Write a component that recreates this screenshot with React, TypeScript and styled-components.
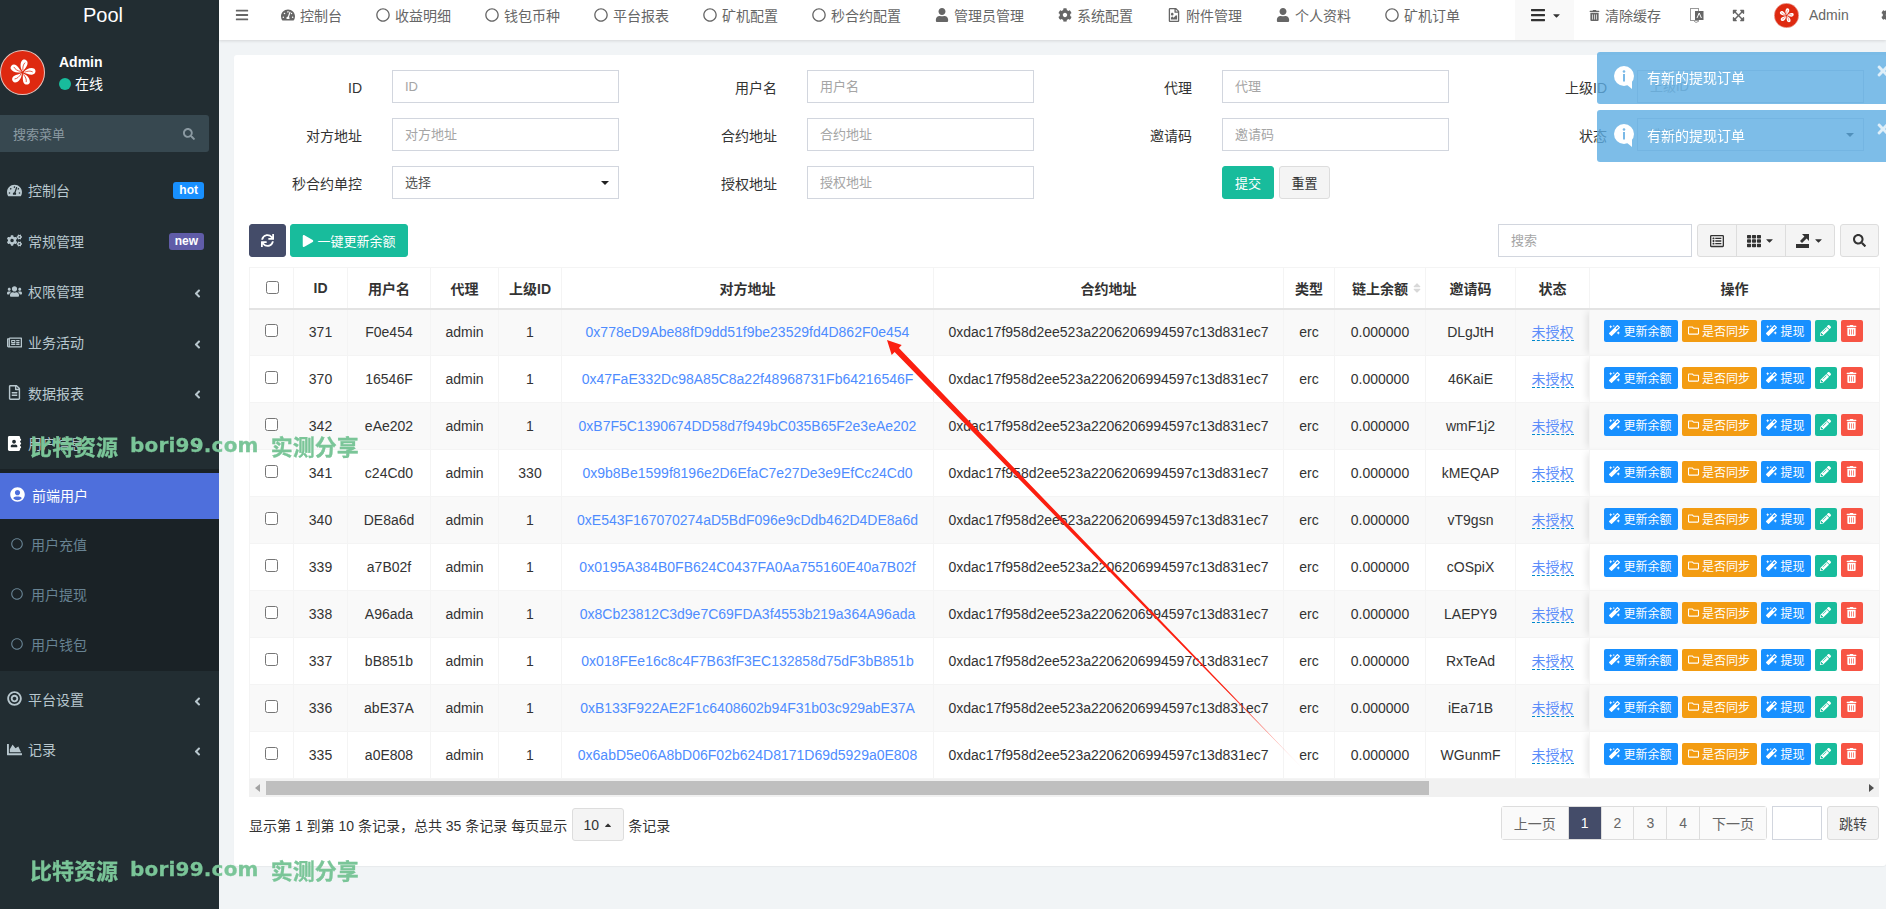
import React from "react";
import styled, { createGlobalStyle } from "styled-components";
import {
  FaAddressBook,
  FaAngleDown,
  FaAngleLeft,
  FaBars,
  FaBullseye,
  FaCaretDown,
  FaCaretUp,
  FaChartArea,
  FaCog,
  FaCogs,
  FaExpandArrowsAlt,
  FaMagic,
  FaPencilAlt,
  FaPlay,
  FaRegCircle,
  FaRegFileAlt,
  FaRegFileImage,
  FaRegFolder,
  FaRegListAlt,
  FaRegNewspaper,
  FaSearch,
  FaSort,
  FaSync,
  FaTachometerAlt,
  FaTh,
  FaTimes,
  FaTrashAlt,
  FaUser,
  FaUserCircle,
  FaUsers,
} from "react-icons/fa";

const GlobalStyle = createGlobalStyle`
  * {
    box-sizing: border-box;
  }
  html, body {
    margin: 0;
    padding: 0;
    height: 909px;
    overflow: hidden;
    background: #f1f4f6;
    font-family: "Liberation Sans", "Noto Sans CJK SC", sans-serif;
    font-size: 14px;
    color: #333;
  }
`;

const Layout = styled.div`
  display: flex;
  width: 1886px;
  height: 909px;
  overflow: hidden;
`;

/* sidebar */
const Sidebar = styled.aside`
  width: 219px;
  flex-shrink: 0;
  height: 909px;
  background: #222d32;
  color: #b8c7ce;
`;
const Logo = styled.div`
  height: 30px;
  line-height: 30px;
  text-align: center;
  font-size: 20px;
  color: #fff;
  padding-right: 13px;
`;
const UserPanel = styled.div`
  display: flex;
  align-items: center;
  gap: 14px;
  margin-top: 20px;
  height: 45px;
`;
const UserName = styled.div`
  font-size: 14px;
  font-weight: 700;
  color: #fff;
  line-height: 18px;
  margin: 1px 0 4px;
`;
const UserStatus = styled.div`
  display: flex;
  align-items: center;
  gap: 4px;
  color: #fff;
  font-size: 14px;
  line-height: 18px;
`;
const StatusDot = styled.span`
  width: 12px;
  height: 12px;
  border-radius: 50%;
  background: #18bc9c;
`;
const MenuSearch = styled.div`
  display: flex;
  align-items: center;
  justify-content: space-between;
  width: 209px;
  height: 37px;
  margin: 20px 0 13px;
  padding: 0 14px 0 13px;
  background: #374850;
  border-radius: 0 3px 3px 0;
  color: #8b9aa2;
  font-size: 13px;
`;
const MenuRow = styled.div`
  position: relative;
  display: flex;
  align-items: center;
  height: 50.6px;
  padding-left: 6px;
  font-size: 14px;
  color: #b8c7ce;
`;
const MenuIcon = styled.span`
  display: flex;
  justify-content: center;
  width: 16px;
  margin-right: 6px;
  font-size: 15px;
`;
const Badge = styled.span<{ $bg: string }>`
  position: absolute;
  right: 15px;
  top: 17px;
  height: 17px;
  line-height: 17px;
  padding: 0 6px;
  border-radius: 3px;
  background: ${(p) => p.$bg};
  color: #fff;
  font-size: 12px;
  font-weight: 700;
`;
const MenuArrow = styled.span`
  position: absolute;
  right: 15px;
  top: 21px;
  font-size: 13px;
  line-height: 13px;
  color: #b8c7ce;
`;
const SubMenu = styled.div`
  background: #1a2226;
  padding: 4px 0 2px;
  margin-bottom: 3px;
`;
const ActiveRow = styled.div`
  display: flex;
  align-items: center;
  gap: 7px;
  height: 46px;
  padding: 0 0 2px 10px;
  background: #4e6fdc;
  color: #fff;
  font-size: 14px;
`;
const SubRow = styled.div`
  display: flex;
  align-items: center;
  gap: 8px;
  height: 50px;
  padding-left: 11px;
  font-size: 14px;
  color: #688393;
`;

/* top bar */
const Main = styled.div`
  flex: 1;
  min-width: 0;
`;
const TopBar = styled.header`
  display: flex;
  align-items: flex-start;
  height: 40px;
  padding-left: 16px;
  background: #fff;
  box-shadow: 0 1px 3px rgba(0, 0, 0, 0.12);
  color: #666;
`;
const TopItem = styled.div<{ $gap?: number }>`
  display: flex;
  align-items: center;
  flex-shrink: 0;
  gap: 5px;
  height: 30px;
  margin-right: ${(p) => p.$gap ?? 34}px;
  font-size: 14px;
  white-space: nowrap;
  svg {
    font-size: 14px;
    flex-shrink: 0;
  }
`;
const TopName = styled.span`
  margin-left: 5px;
`;
const TopBlock = styled.div`
  display: flex;
  align-items: center;
  justify-content: center;
  flex-shrink: 0;
  gap: 5px;
  width: 59px;
  height: 40px;
  padding: 0 0 10px 3px;
  margin: 0 15px 0 21px;
  background: #f9f9f9;
  color: #333;
  svg:first-child {
    font-size: 16px;
  }
  svg:last-child {
    font-size: 11px;
  }
`;
const FlagSvg = styled.svg`
  flex-shrink: 0;
`;

/* content card */
const Card = styled.section`
  margin: 15px 0 0 15px;
  padding: 15px 7px 25px 15px;
  background: #fff;
  border-radius: 3px;
  box-shadow: 0 1px 1px rgba(0, 0, 0, 0.04);
`;
const FilterGrid = styled.form`
  display: grid;
  grid-template-columns: repeat(4, 370px);
  column-gap: 45px;
  row-gap: 15px;
`;
const Field = styled.div`
  display: flex;
  align-items: flex-start;
  height: 33px;
`;
const FieldLabel = styled.label`
  width: 113px;
  margin-right: 30px;
  padding-top: 10px;
  text-align: right;
  font-size: 14px;
  line-height: 16px;
  color: #333;
`;
const TextInput = styled.input<{ $width?: number; $height?: number }>`
  width: ${(p) => p.$width ?? 227}px;
  height: ${(p) => p.$height ?? 33}px;
  padding: 0 12px;
  border: 1px solid #d2d6de;
  background: #fff;
  font-family: inherit;
  font-size: 13px;
  color: #555;
  outline: none;
  &::placeholder {
    color: #a5a5a5;
  }
`;
const SelectBox = styled.div<{ $muted?: boolean }>`
  display: flex;
  align-items: center;
  justify-content: space-between;
  width: 227px;
  height: 33px;
  padding: 0 9px 3px 12px;
  border: 1px solid #d2d6de;
  font-size: 13px;
  color: ${(p) => (p.$muted ? "#a5a5a5" : "#555")};
`;
const SelectCaret = styled.span`
  width: 0;
  height: 0;
  margin-top: 3px;
  border-left: 4px solid transparent;
  border-right: 4px solid transparent;
  border-top: 4px solid #222;
`;
const FormButtons = styled.div`
  display: flex;
  gap: 5px;
  margin-left: 143px;
`;
const Btn = styled.button<{ $bg?: string; $color?: string; $width?: number }>`
  display: inline-flex;
  align-items: center;
  justify-content: center;
  gap: 3px;
  height: 33px;
  width: ${(p) => (p.$width ? `${p.$width}px` : "auto")};
  padding: 0;
  border: 1px solid ${(p) => p.$bg ?? "#ddd"};
  border-radius: 3px;
  background: ${(p) => p.$bg ?? "#f4f4f4"};
  color: ${(p) => p.$color ?? "#fff"};
  font-family: inherit;
  font-size: 13px;
`;
const Toolbar = styled.div`
  display: flex;
  align-items: center;
  gap: 4px;
  margin-top: 25px;
`;
const ToolbarRight = styled.div`
  display: flex;
  align-items: center;
  gap: 5px;
  margin-left: auto;
`;
const BtnGroup = styled.div`
  display: flex;
  height: 33px;
  border: 1px solid #ddd;
  border-radius: 3px;
  background: #f4f4f4;
  color: #333;
`;
const GroupCell = styled.div<{ $width: number }>`
  display: flex;
  align-items: center;
  justify-content: center;
  gap: 3px;
  width: ${(p) => p.$width}px;
  font-size: 14px;
  & + & {
    border-left: 1px solid #ddd;
  }
`;

/* table */
const Table = styled.table`
  width: 1630px;
  margin-top: 10px;
  border-collapse: collapse;
  table-layout: fixed;
  font-size: 14px;
  color: #333;
`;
const Th = styled.th<{ $fixed?: boolean }>`
  position: relative;
  height: 41px;
  padding: 0;
  border: 1px solid #f4f4f4;
  border-bottom: 2px solid #e3e3e3;
  text-align: center;
  font-size: 14px;
  font-weight: 700;
  white-space: nowrap;
  background: #fff;
  ${(p) => (p.$fixed ? "box-shadow: -6px 0 7px -3px rgba(0,0,0,.1);" : "")}
`;
const SortMark = styled.span`
  position: absolute;
  right: 2px;
  top: 14px;
  font-size: 12px;
  color: #d8d8d8;
`;
const Row = styled.tr<{ $odd: boolean }>`
  height: 47px;
  background: ${(p) => (p.$odd ? "#f9f9f9" : "#fff")};
`;
const Td = styled.td<{ $fixed?: boolean }>`
  padding: 0;
  border: 1px solid #f4f4f4;
  text-align: center;
  white-space: nowrap;
  ${(p) => (p.$fixed ? "box-shadow: -6px 0 7px -3px rgba(0,0,0,.1);" : "")}
`;
const RowCheck = styled.input`
  margin: 0 0 4px;
  vertical-align: middle;
`;
const AddressLink = styled.a`
  color: #4e8cff;
`;
const AuthLink = styled.a`
  display: inline-block;
  line-height: 16px;
  margin-top: -2px;
  color: #5c8dfa;
  border-bottom: 1px dashed #0088cc;
`;
const Actions = styled.div`
  display: flex;
  justify-content: center;
  gap: 4px;
  padding: 0 3px 3px 0;
`;
const ActionBtn = styled.span<{ $bg: string; $width: number }>`
  display: inline-flex;
  align-items: center;
  justify-content: center;
  gap: 3px;
  width: ${(p) => p.$width}px;
  height: 22px;
  border-radius: 2px;
  background: ${(p) => p.$bg};
  color: #fff;
  font-size: 12px;
  svg {
    font-size: 11px;
  }
`;
const ScrollTrack = styled.div`
  display: flex;
  align-items: center;
  width: 1630px;
  height: 18px;
  background: #f1f1f1;
`;
const ScrollLeft = styled.span`
  width: 0;
  height: 0;
  margin: 0 6px 0 6px;
  border-top: 4px solid transparent;
  border-bottom: 4px solid transparent;
  border-right: 5px solid #a3a3a3;
`;
const ScrollThumb = styled.div`
  width: 1163px;
  height: 14px;
  background: #bfbfbf;
`;
const ScrollRight = styled.span`
  width: 0;
  height: 0;
  margin-left: auto;
  margin-right: 5px;
  border-top: 4px solid transparent;
  border-bottom: 4px solid transparent;
  border-left: 5px solid #505050;
`;

/* footer */
const Footer = styled.div`
  display: flex;
  align-items: flex-start;
  justify-content: space-between;
  margin-top: 9px;
  height: 35px;
`;
const PageInfo = styled.div`
  display: flex;
  align-items: center;
  gap: 4px;
  height: 33px;
  margin-top: 2px;
  font-size: 14px;
  white-space: nowrap;
`;
const PageSize = styled.div`
  display: flex;
  align-items: center;
  justify-content: center;
  gap: 4px;
  width: 52px;
  height: 33px;
  margin-left: 1px;
  background: #f4f4f4;
  border: 1px solid #ddd;
  border-radius: 3px;
  color: #333;
  svg {
    font-size: 10px;
  }
`;
const Pager = styled.div`
  display: flex;
  align-items: center;
  gap: 5px;
`;
const PageList = styled.div`
  display: flex;
  height: 34px;
  border: 1px solid #ddd;
  border-radius: 3px;
`;
const PageItem = styled.span<{ $active?: boolean }>`
  display: flex;
  align-items: center;
  padding: 0 12px;
  background: ${(p) => (p.$active ? "#444c69" : "#fafafa")};
  color: ${(p) => (p.$active ? "#fff" : "#666")};
  & + & {
    border-left: 1px solid #ddd;
  }
`;
const JumpBtn = styled.span`
  display: flex;
  align-items: center;
  height: 34px;
  padding: 0 11px;
  background: #f4f4f4;
  border: 1px solid #ddd;
  border-radius: 3px;
  color: #444;
`;

/* overlays */
const NoticeStack = styled.div`
  position: fixed;
  top: 52px;
  left: 1597px;
  display: flex;
  flex-direction: column;
  gap: 6px;
  width: 300px;
`;
const Notice = styled.div`
  position: relative;
  display: flex;
  align-items: center;
  gap: 13px;
  height: 52px;
  padding: 0 0 2px 17px;
  border-radius: 3px;
  background: rgba(93, 173, 226, 0.8);
  color: #fff;
  font-size: 14px;
`;
const NoticeClose = styled.span`
  position: absolute;
  top: 11px;
  left: 278px;
  font-size: 16px;
  color: rgba(255, 255, 255, 0.75);
`;
const NoticeSvg = styled.svg`
  flex-shrink: 0;
`;
const Watermark = styled.div<{ $top: number }>`
  position: fixed;
  top: ${(p) => p.$top}px;
  left: 30px;
  display: flex;
  align-items: center;
  gap: 12px;
  height: 26px;
  color: #7ac598;
  font-weight: 700;
  font-size: 22px;
  -webkit-text-stroke: 0.3px #7ac598;
  white-space: nowrap;
  pointer-events: none;
`;
const WatermarkUrl = styled.span`
  font-family: "DejaVu Sans", sans-serif;
  font-size: 20px;
  font-weight: 700;
  letter-spacing: 0.2px;
`;
const ArrowLayer = styled.svg`
  position: fixed;
  top: 0;
  left: 0;
  pointer-events: none;
`;

const Flag = ({ size }: { size: number }) => (
  <FlagSvg width={size} height={size} viewBox="0 0 44 44">
    <circle cx="22" cy="22" r="21.5" fill="#de2910" stroke="#e9c3bd" strokeWidth="1" />
    {[0, 72, 144, 216, 288].map((a) => (
      <g key={a} transform={`rotate(${a + 12} 22 22)`}>
        <path d="M22 21 C18.5 18 17.5 13 19.5 10 C22 8 25.5 10 25 13.5 C24.5 16.5 23 18.5 22 21 Z" fill="#fff" />
        <path d="M22 20 C21 17 21 14 22.5 12" stroke="#de2910" strokeWidth="0.7" fill="none" />
      </g>
    ))}
  </FlagSvg>
);

const NoticeIcon = () => (
  <NoticeSvg width="20" height="23" viewBox="0 0 20 23">
    <circle cx="10" cy="10" r="10" fill="#fff" />
    <path d="M12 18 L18 23 L18 15 Z" fill="#fff" />
    <circle cx="10" cy="5.5" r="1.3" fill="#7ab9e7" />
    <rect x="9" y="8" width="2" height="7.5" fill="#7ab9e7" />
  </NoticeSvg>
);

const ExportIcon = () => (
  <svg width="14" height="14" viewBox="0 0 14 14">
    <rect x="0" y="10" width="13" height="4" fill="#333" />
    <path d="M6 0 H13 V7 L10.6 4.6 L6 9 L4 7 L8.4 2.4 Z" fill="#333" />
  </svg>
);

const LanguageIcon = () => (
  <svg width="14" height="15" viewBox="0 0 14 15">
    <rect x="0.5" y="0.5" width="8" height="12" fill="#fff" stroke="#999" />
    <rect x="5" y="3" width="8.5" height="9" fill="#666" />
    <path d="M7 10 L9.2 5 L11.4 10" stroke="#fff" strokeWidth="1" fill="none" />
    <path d="M4 13 L6 14.5 L9 13" stroke="#999" fill="none" />
  </svg>
);

const navItems = [
  { icon: <FaTachometerAlt />, label: "控制台" },
  { icon: <FaRegCircle />, label: "收益明细" },
  { icon: <FaRegCircle />, label: "钱包币种" },
  { icon: <FaRegCircle />, label: "平台报表" },
  { icon: <FaRegCircle />, label: "矿机配置" },
  { icon: <FaRegCircle />, label: "秒合约配置" },
  { icon: <FaUser />, label: "管理员管理" },
  { icon: <FaCog />, label: "系统配置" },
  { icon: <FaRegFileImage />, label: "附件管理" },
  { icon: <FaUser />, label: "个人资料" },
  { icon: <FaRegCircle />, label: "矿机订单" },
];

const rows = [
  ["371", "F0e454", "1", "0x778eD9Abe88fD9dd51f9be23529fd4D862F0e454", "DLgJtH"],
  ["370", "16546F", "1", "0x47FaE332Dc98A85C8a22f48968731Fb64216546F", "46KaiE"],
  ["342", "eAe202", "1", "0xB7F5C1390674DD58d7f949bC035B65F2e3eAe202", "wmF1j2"],
  ["341", "c24Cd0", "330", "0x9b8Be1599f8196e2D6EfaC7e27De3e9EfCc24Cd0", "kMEQAP"],
  ["340", "DE8a6d", "1", "0xE543F167070274aD5BdF096e9cDdb462D4DE8a6d", "vT9gsn"],
  ["339", "a7B02f", "1", "0x0195A384B0FB624C0437FA0Aa755160E40a7B02f", "cOSpiX"],
  ["338", "A96ada", "1", "0x8Cb23812C3d9e7C69FDA3f4553b219a364A96ada", "LAEPY9"],
  ["337", "bB851b", "1", "0x018FEe16c8c4F7B63fF3EC132858d75dF3bB851b", "RxTeAd"],
  ["336", "abE37A", "1", "0xB133F922AE2F1c6408602b94F31b03c929abE37A", "iEa71B"],
  ["335", "a0E808", "1", "0x6abD5e06A8bD06F02b624D8171D69d5929a0E808", "WGunmF"],
];

const colWidths = [44, 54, 83, 68, 63, 372, 350, 51, 91, 90, 74, 290];

const MenuItem = ({
  icon,
  label,
  arrow,
  children,
}: {
  icon: React.ReactNode;
  label: string;
  arrow?: React.ReactNode;
  children?: React.ReactNode;
}) => (
  <MenuRow>
    <MenuIcon>{icon}</MenuIcon>
    {label}
    {arrow && <MenuArrow>{arrow}</MenuArrow>}
    {children}
  </MenuRow>
);

export default function App() {
  return (
    <Layout>
      <GlobalStyle />
      <Sidebar>
        <Logo>Pool</Logo>
        <UserPanel>
          <Flag size={45} />
          <div>
            <UserName>Admin</UserName>
            <UserStatus>
              <StatusDot />
              在线
            </UserStatus>
          </div>
        </UserPanel>
        <MenuSearch>
          搜索菜单
          <FaSearch size={12} />
        </MenuSearch>
        <MenuItem icon={<FaTachometerAlt />} label="控制台">
          <Badge $bg="#1890ff">hot</Badge>
        </MenuItem>
        <MenuItem icon={<FaCogs />} label="常规管理">
          <Badge $bg="#605ca8">new</Badge>
        </MenuItem>
        <MenuItem icon={<FaUsers />} label="权限管理" arrow={<FaAngleLeft />} />
        <MenuItem icon={<FaRegNewspaper />} label="业务活动" arrow={<FaAngleLeft />} />
        <MenuItem icon={<FaRegFileAlt />} label="数据报表" arrow={<FaAngleLeft />} />
        <MenuItem icon={<FaAddressBook color="#fff" />} label="用户信息" arrow={<FaAngleDown />} />
        <SubMenu>
          <ActiveRow>
            <FaUserCircle size={15} />
            前端用户
          </ActiveRow>
          <SubRow>
            <FaRegCircle size={12} />
            用户充值
          </SubRow>
          <SubRow>
            <FaRegCircle size={12} />
            用户提现
          </SubRow>
          <SubRow>
            <FaRegCircle size={12} />
            用户钱包
          </SubRow>
        </SubMenu>
        <MenuItem icon={<FaBullseye />} label="平台设置" arrow={<FaAngleLeft />} />
        <MenuItem icon={<FaChartArea />} label="记录" arrow={<FaAngleLeft />} />
      </Sidebar>

      <Main>
        <TopBar>
          <TopItem $gap={32}>
            <FaBars />
          </TopItem>
          {navItems.map((item) => (
            <TopItem key={item.label}>
              {item.icon}
              {item.label}
            </TopItem>
          ))}
          <TopBlock>
            <FaBars />
            <FaCaretDown />
          </TopBlock>
          <TopItem $gap={29}>
            <FaTrashAlt size={11} />
            清除缓存
          </TopItem>
          <TopItem $gap={28}>
            <LanguageIcon />
          </TopItem>
          <TopItem $gap={29}>
            <FaExpandArrowsAlt size={13} />
          </TopItem>
          <TopItem $gap={32}>
            <Flag size={25} />
            <TopName>Admin</TopName>
          </TopItem>
          <TopItem $gap={0}>
            <FaCog />
          </TopItem>
        </TopBar>

        <Card>
          <FilterGrid>
            <Field>
              <FieldLabel>ID</FieldLabel>
              <TextInput placeholder="ID" />
            </Field>
            <Field>
              <FieldLabel>用户名</FieldLabel>
              <TextInput placeholder="用户名" />
            </Field>
            <Field>
              <FieldLabel>代理</FieldLabel>
              <TextInput placeholder="代理" />
            </Field>
            <Field>
              <FieldLabel>上级ID</FieldLabel>
              <TextInput placeholder="上级ID" />
            </Field>
            <Field>
              <FieldLabel>对方地址</FieldLabel>
              <TextInput placeholder="对方地址" />
            </Field>
            <Field>
              <FieldLabel>合约地址</FieldLabel>
              <TextInput placeholder="合约地址" />
            </Field>
            <Field>
              <FieldLabel>邀请码</FieldLabel>
              <TextInput placeholder="邀请码" />
            </Field>
            <Field>
              <FieldLabel>状态</FieldLabel>
              <SelectBox $muted>
                选择
                <SelectCaret />
              </SelectBox>
            </Field>
            <Field>
              <FieldLabel>秒合约单控</FieldLabel>
              <SelectBox>
                选择
                <SelectCaret />
              </SelectBox>
            </Field>
            <Field>
              <FieldLabel>授权地址</FieldLabel>
              <TextInput placeholder="授权地址" />
            </Field>
            <FormButtons>
              <Btn $bg="#18bc9c" $width={52}>
                提交
              </Btn>
              <Btn $color="#333" $width={51}>
                重置
              </Btn>
            </FormButtons>
          </FilterGrid>

          <Toolbar>
            <Btn $bg="#444c69" $width={37}>
              <FaSync size={13} />
            </Btn>
            <Btn $bg="#18bc9c" $width={118}>
              <FaPlay size={12} />
              一键更新余额
            </Btn>
            <ToolbarRight>
              <TextInput placeholder="搜索" $width={194} />
              <BtnGroup>
                <GroupCell $width={38}>
                  <FaRegListAlt />
                </GroupCell>
                <GroupCell $width={49}>
                  <FaTh />
                  <FaCaretDown size={11} />
                </GroupCell>
                <GroupCell $width={49}>
                  <ExportIcon />
                  <FaCaretDown size={11} />
                </GroupCell>
              </BtnGroup>
              <BtnGroup>
                <GroupCell $width={37}>
                  <FaSearch size={13} />
                </GroupCell>
              </BtnGroup>
            </ToolbarRight>
          </Toolbar>

          <Table>
            <colgroup>
              {colWidths.map((w, i) => (
                <col key={i} width={w} />
              ))}
            </colgroup>
            <thead>
              <tr>
                <Th>
                  <input type="checkbox" />
                </Th>
                <Th>ID</Th>
                <Th>用户名</Th>
                <Th>代理</Th>
                <Th>上级ID</Th>
                <Th>对方地址</Th>
                <Th>合约地址</Th>
                <Th>类型</Th>
                <Th>
                  链上余额
                  <SortMark>
                    <FaSort />
                  </SortMark>
                </Th>
                <Th>邀请码</Th>
                <Th>状态</Th>
                <Th $fixed>操作</Th>
              </tr>
            </thead>
            <tbody>
              {rows.map((r, i) => (
                <Row key={r[0]} $odd={i % 2 === 0}>
                  <Td>
                    <RowCheck type="checkbox" />
                  </Td>
                  <Td>{r[0]}</Td>
                  <Td>{r[1]}</Td>
                  <Td>admin</Td>
                  <Td>{r[2]}</Td>
                  <Td>
                    <AddressLink>{r[3]}</AddressLink>
                  </Td>
                  <Td>0xdac17f958d2ee523a2206206994597c13d831ec7</Td>
                  <Td>erc</Td>
                  <Td>0.000000</Td>
                  <Td>{r[4]}</Td>
                  <Td>
                    <AuthLink>未授权</AuthLink>
                  </Td>
                  <Td $fixed>
                    <Actions>
                      <ActionBtn $bg="#1890ff" $width={74}>
                        <FaMagic />
                        更新余额
                      </ActionBtn>
                      <ActionBtn $bg="#f39c12" $width={75}>
                        <FaRegFolder />
                        是否同步
                      </ActionBtn>
                      <ActionBtn $bg="#1890ff" $width={50}>
                        <FaMagic />
                        提现
                      </ActionBtn>
                      <ActionBtn $bg="#18bc9c" $width={22}>
                        <FaPencilAlt />
                      </ActionBtn>
                      <ActionBtn $bg="#f75444" $width={22}>
                        <FaTrashAlt />
                      </ActionBtn>
                    </Actions>
                  </Td>
                </Row>
              ))}
            </tbody>
          </Table>
          <ScrollTrack>
            <ScrollLeft />
            <ScrollThumb />
            <ScrollRight />
          </ScrollTrack>

          <Footer>
            <PageInfo>
              显示第 1 到第 10 条记录，总共 35 条记录 每页显示
              <PageSize>
                10
                <FaCaretUp />
              </PageSize>
              条记录
            </PageInfo>
            <Pager>
              <PageList>
                <PageItem>上一页</PageItem>
                <PageItem $active>1</PageItem>
                <PageItem>2</PageItem>
                <PageItem>3</PageItem>
                <PageItem>4</PageItem>
                <PageItem>下一页</PageItem>
              </PageList>
              <TextInput $width={50} $height={34} />
              <JumpBtn>跳转</JumpBtn>
            </Pager>
          </Footer>
        </Card>
      </Main>

      <NoticeStack>
        <Notice>
          <NoticeIcon />
          有新的提现订单
          <NoticeClose>
            <FaTimes />
          </NoticeClose>
        </Notice>
        <Notice>
          <NoticeIcon />
          有新的提现订单
          <NoticeClose>
            <FaTimes />
          </NoticeClose>
        </Notice>
      </NoticeStack>

      <ArrowLayer width="1886" height="909" viewBox="0 0 1886 909">
        <defs>
          <linearGradient id="arrowFade" gradientUnits="userSpaceOnUse" x1="1306" y1="772" x2="1230" y2="693">
            <stop offset="0" stopColor="#fb1f10" stopOpacity="0" />
            <stop offset="1" stopColor="#fb1f10" />
          </linearGradient>
        </defs>
        <polygon
          points="887,340 901.7,345.1 898.9,347.9 1306,772 894.6,352.1 891.7,354.9"
          fill="url(#arrowFade)"
        />
      </ArrowLayer>

      <Watermark $top={432}>
        比特资源
        <WatermarkUrl>bori99.com</WatermarkUrl>
        实测分享
      </Watermark>
      <Watermark $top={856}>
        比特资源
        <WatermarkUrl>bori99.com</WatermarkUrl>
        实测分享
      </Watermark>
    </Layout>
  );
}
